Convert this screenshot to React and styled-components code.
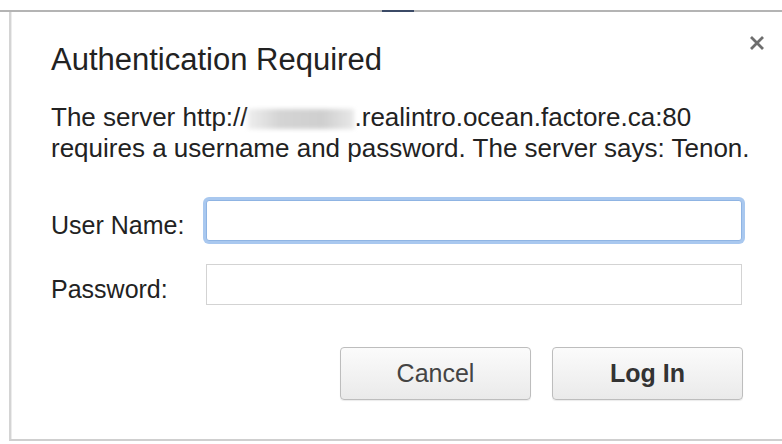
import styled, { createGlobalStyle } from "styled-components";

const Global = createGlobalStyle`
  html, body { margin: 0; padding: 0; background: #fff; }
  body { font-family: "Liberation Sans", Arial, sans-serif; overflow: hidden; }
`;

const Page = styled.div`
  width: 782px;
  height: 444px;
  display: flex;
  flex-direction: column;
  background: #fff;
`;

const TopEdge = styled.div`
  height: 10px;
  border-bottom: 2px solid #b4b4b4;
  display: flex;
  justify-content: center;
  align-items: flex-end;
  flex-shrink: 0;
`;

const Tab = styled.div`
  width: 32px;
  height: 2px;
  margin-bottom: -2px;
  margin-left: 14px;
  background: #3b4a66;
`;

const Dialog = styled.div`
  margin-left: 9px;
  height: 429px;
  border-left: 2px solid #d4d4d4;
  border-bottom: 2px solid #cfcfcf;
  box-shadow: inset 1px 0 0 #ececec;
  position: relative;
  display: flex;
  flex-direction: column;
  padding: 30px 40px 0 40px;
  box-sizing: border-box;
`;

const Close = styled.button`
  position: absolute;
  top: 22px;
  right: 16px;
  border: none;
  background: none;
  padding: 0;
  width: 18px;
  height: 18px;
  cursor: pointer;
`;

const Title = styled.h1`
  margin: 0;
  font-size: 31px;
  line-height: 36px;
  font-weight: normal;
  color: #222;
`;

const Message = styled.p`
  margin: 24px 0 0;
  font-size: 26px;
  line-height: 31px;
  color: #222;
  white-space: nowrap;
`;

const Hidden = styled.span`
  display: inline-block;
  width: 106px;
  height: 20px;
  margin: 0 1px 0 0;
  vertical-align: -3px;
  background: linear-gradient(90deg, #eee 0%, #d4d4d4 30%, #cfcfcf 70%, #e8e8e8 100%);
  filter: blur(2px);
`;

const Form = styled.div`
  margin-top: 36px;
  display: grid;
  grid-template-columns: 155px 1fr;
  row-gap: 23px;
  align-items: center;
`;

const Label = styled.label`
  padding-top: 9px;
  font-size: 25px;
  color: #222;
`;

const Input = styled.input`
  height: 41px;
  box-sizing: border-box;
  border: 1px solid ${p => (p.focused ? "#8fb4e3" : "#d3d3d3")};
  border-radius: ${p => (p.focused ? "3px" : "0")};
  box-shadow: ${p => (p.focused ? "0 0 0 3px #a9c8ef" : "none")};
  background: #fff;
  outline: none;
`;

const Actions = styled.div`
  margin-top: 42px;
  margin-right: -1px;
  display: flex;
  justify-content: flex-end;
  gap: 21px;
`;

const Button = styled.button`
  width: 191px;
  height: 53px;
  border: 1px solid #bdbdbd;
  border-radius: 4px;
  background: linear-gradient(#fbfbfb, #eaeaea);
  box-shadow: 0 1px 1px rgba(0, 0, 0, 0.08);
  font-family: "Liberation Sans", Arial, sans-serif;
  font-size: 25px;
  font-weight: ${p => (p.primary ? "bold" : "normal")};
  color: ${p => (p.primary ? "#333" : "#444")};
  cursor: pointer;
`;

export default function App() {
  return (
    <Page>
      <Global />
      <TopEdge>
        <Tab />
      </TopEdge>
      <Dialog>
        <Close aria-label="Close">
          <svg width="18" height="18" viewBox="0 0 18 18">
            <path d="M3 3 L15 15 M15 3 L3 15" stroke="#6e6e6e" strokeWidth="2.8" />
          </svg>
        </Close>
        <Title>Authentication Required</Title>
        <Message>
          The server http://<Hidden />.realintro.ocean.factore.ca:80
          <br />
          requires a username and password. The server says: Tenon.
        </Message>
        <Form>
          <Label>User Name:</Label>
          <Input focused />
          <Label>Password:</Label>
          <Input type="password" />
        </Form>
        <Actions>
          <Button>Cancel</Button>
          <Button primary>Log In</Button>
        </Actions>
      </Dialog>
    </Page>
  );
}
